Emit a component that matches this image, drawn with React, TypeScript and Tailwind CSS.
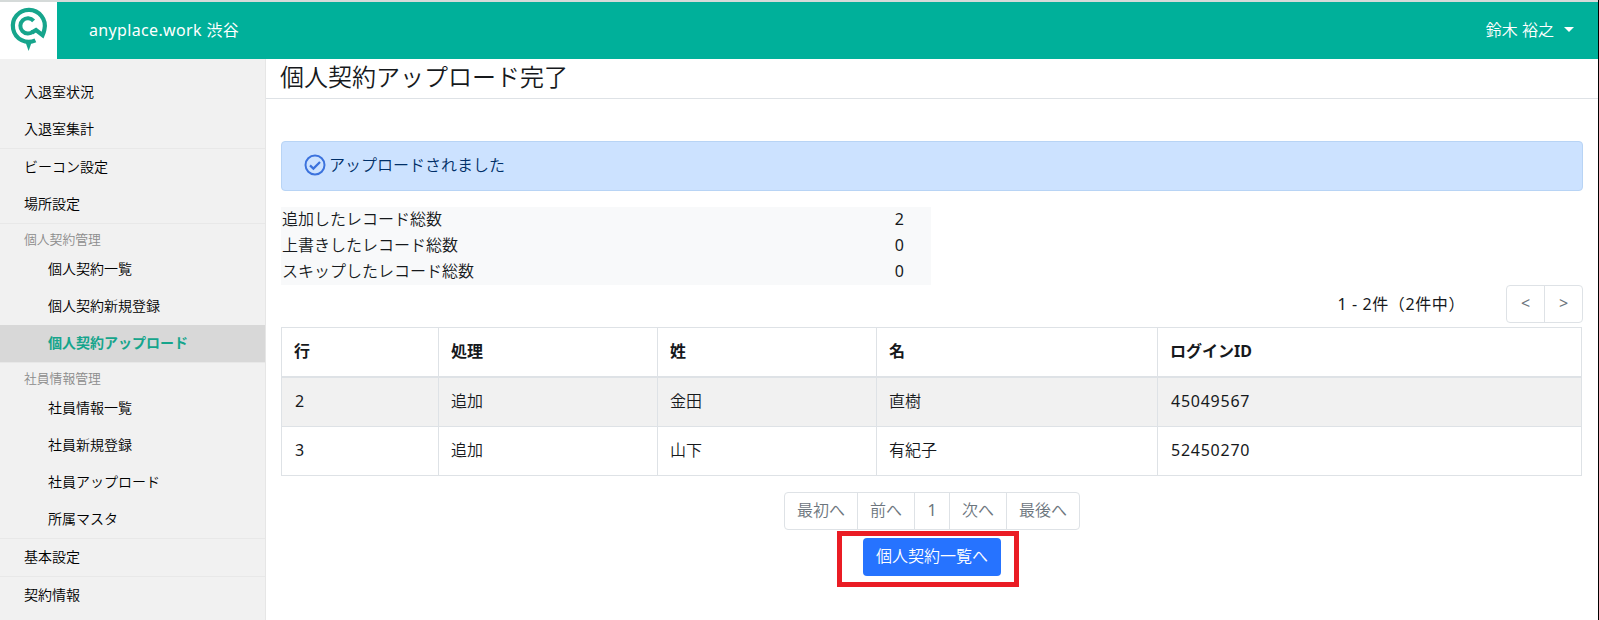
import { clsx } from "clsx";

interface NavItem {
  label: string;
  isActive?: boolean;
}

interface NavSection {
  title?: string;
  items: NavItem[];
}

const NAV_SECTIONS: NavSection[] = [
  { items: [{ label: "入退室状況" }, { label: "入退室集計" }] },
  { items: [{ label: "ビーコン設定" }, { label: "場所設定" }] },
  {
    title: "個人契約管理",
    items: [
      { label: "個人契約一覧" },
      { label: "個人契約新規登録" },
      { label: "個人契約アップロード", isActive: true },
    ],
  },
  {
    title: "社員情報管理",
    items: [
      { label: "社員情報一覧" },
      { label: "社員新規登録" },
      { label: "社員アップロード" },
      { label: "所属マスタ" },
    ],
  },
  { items: [{ label: "基本設定" }] },
  { items: [{ label: "契約情報" }] },
];

const SUMMARY = [
  { label: "追加したレコード総数", count: 2 },
  { label: "上書きしたレコード総数", count: 0 },
  { label: "スキップしたレコード総数", count: 0 },
];

const COLUMNS = ["行", "処理", "姓", "名", "ログインID"];

const ROWS = [
  ["2", "追加", "金田", "直樹", "45049567"],
  ["3", "追加", "山下", "有紀子", "52450270"],
];

const PAGES = ["最初へ", "前へ", "1", "次へ", "最後へ"];

function Logo() {
  return (
    <svg viewBox="0 0 57 57" className="h-[57px] w-[57px]" fill="none" stroke="#16a58c">
      <path
        d="M35.4 38.4A16 16 0 1 1 44.4 27.5Q43.8 30.5 42.6 33.2L36 28L31.8 30.6"
        strokeWidth="4.2"
      />
      <path d="M33.6 18.8A7.6 7.6 0 1 0 33.2 29.4" strokeWidth="4" />
      <path d="M25.6 40.5h6l-3 8.6z" fill="#16a58c" stroke="none" />
    </svg>
  );
}

function Header() {
  return (
    <header className="flex h-[59px] shrink-0 border-t-2 border-[#d5dad9] bg-[#00b09a] text-white">
      <a href="#" className="h-[57px] w-[57px] bg-white">
        <Logo />
      </a>
      <div className="flex flex-1 items-center justify-between pr-6 pb-0.5 pl-8">
        <span className="font-normal tracking-[0.35px]">anyplace.work 渋谷</span>
        <button type="button" className="flex items-center">
          鈴木 裕之
          <span className="ml-[10px] border-x-[5px] border-t-[5px] border-x-transparent border-t-white" />
        </button>
      </div>
    </header>
  );
}

function Sidebar() {
  return (
    <nav className="w-[266px] shrink-0 border-r border-[#e6e6e6] bg-[#f1f1f1] pt-[15px] text-sm text-black">
      {NAV_SECTIONS.map(({ title, items }, index) => (
        <div key={items[0].label} className={clsx(index > 0 && "border-t border-[#e8e8e8]")}>
          {title && (
            <h6 className="h-[27px] pt-1.5 pl-6 text-[12.8px] leading-[19px] text-[#8c8c8c]">{title}</h6>
          )}
          {items.map(({ label, isActive }) => (
            <a
              key={label}
              href="#"
              className={clsx(
                "block h-[37px] pt-[7px] leading-[21px]",
                title ? "pl-12" : "pl-6",
                isActive && "bg-[#d8d8d8] font-bold text-[#16a58c]",
              )}
            >
              {label}
            </a>
          ))}
        </div>
      ))}
    </nav>
  );
}

function UploadedAlert() {
  return (
    <div className="mt-[42px] flex h-[50px] items-center rounded border border-[#b8d4f5] bg-[#cce2ff] pb-0.5 pl-[22px] text-[#002f68]">
      <svg viewBox="0 0 22 22" className="mr-[3px] h-[22px] w-[22px]" fill="none" stroke="#3b72dd">
        <circle cx="11" cy="11" r="9.5" strokeWidth="2" />
        <path d="M6 11.4l3.4 3.2L16 8" strokeWidth="2.2" />
      </svg>
      アップロードされました
    </div>
  );
}

function ResultTable() {
  return (
    <table className="mt-1 w-[1301px] table-fixed border-collapse border border-[#dee2e6] text-left">
      <colgroup>
        <col className="w-[157px]" />
        <col className="w-[219px]" />
        <col className="w-[219px]" />
        <col className="w-[281px]" />
        <col />
      </colgroup>
      <thead>
        <tr className="h-[49px]">
          {COLUMNS.map((column) => (
            <th key={column} className="border border-b-2 border-[#dee2e6] px-3 pb-0.5 font-bold">
              {column}
            </th>
          ))}
        </tr>
      </thead>
      <tbody>
        {ROWS.map((row) => (
          <tr key={row[0]} className="h-[49px] odd:h-[50px] odd:bg-[#f1f1f1]">
            {row.map((cell, index) => (
              <td
                key={COLUMNS[index]}
                className={clsx(
                  "border border-[#dee2e6] px-3 pb-0.5",
                  /^\d+$/.test(cell) && "pl-[13px] font-normal tracking-[0.75px]",
                )}
              >
                {cell}
              </td>
            ))}
          </tr>
        ))}
      </tbody>
    </table>
  );
}

export default function App() {
  return (
    <div className="flex h-[620px] w-[1599px] flex-col overflow-hidden border-r border-black bg-white font-['Noto_Sans','Noto_Sans_CJK_JP',sans-serif] text-base font-[350] text-[#16191c]">
      <Header />
      <div className="flex min-h-0 flex-1">
        <Sidebar />
        <main className="min-w-0 flex-1">
          <h1 className="h-10 border-b border-[#dee2e6] pl-[14px] text-2xl leading-9">
            個人契約アップロード完了
          </h1>
          <div className="px-[15px]">
            <UploadedAlert />
            <dl className="mt-4 h-[78px] w-[650px] bg-[#f8f9fa]">
              {SUMMARY.map(({ label, count }) => (
                <div
                  key={label}
                  className="flex h-[26px] items-center justify-between pr-[27px] pb-0.5 pl-px"
                >
                  <dt>{label}</dt>
                  <dd className="font-normal">{count}</dd>
                </div>
              ))}
            </dl>
            <div className="flex h-[38px] items-center justify-end">
              <span className="mr-[41px] font-normal tracking-[0.6px]">1 - 2件（2件中）</span>
              <div className="flex h-[38px] divide-x divide-[#dee2e6] rounded border border-[#dee2e6] font-normal text-[#6c757d]">
                <button type="button" className="w-[38px] pb-0.5">&lt;</button>
                <button type="button" className="w-[37px] pb-0.5">&gt;</button>
              </div>
            </div>
            <ResultTable />
            <div className="mt-4 flex justify-center">
              <div className="flex h-[38px] divide-x divide-[#dee2e6] rounded border border-[#dee2e6] text-[#6c757d]">
                {PAGES.map((page) => (
                  <button
                    key={page}
                    type="button"
                    className={clsx("min-w-[35px] px-3 pb-0.5", page === "1" && "font-normal")}
                  >
                    {page}
                  </button>
                ))}
              </div>
            </div>
            <div className="mt-px ml-[556px] flex h-[56px] w-[182px] border-[5px] border-[#ea1c24] pt-[2px] pl-[21px]">
              <button type="button" className="h-[38px] rounded bg-[#2673ff] px-[13px] pb-0.5 text-white">
                個人契約一覧へ
              </button>
            </div>
          </div>
        </main>
      </div>
    </div>
  );
}
